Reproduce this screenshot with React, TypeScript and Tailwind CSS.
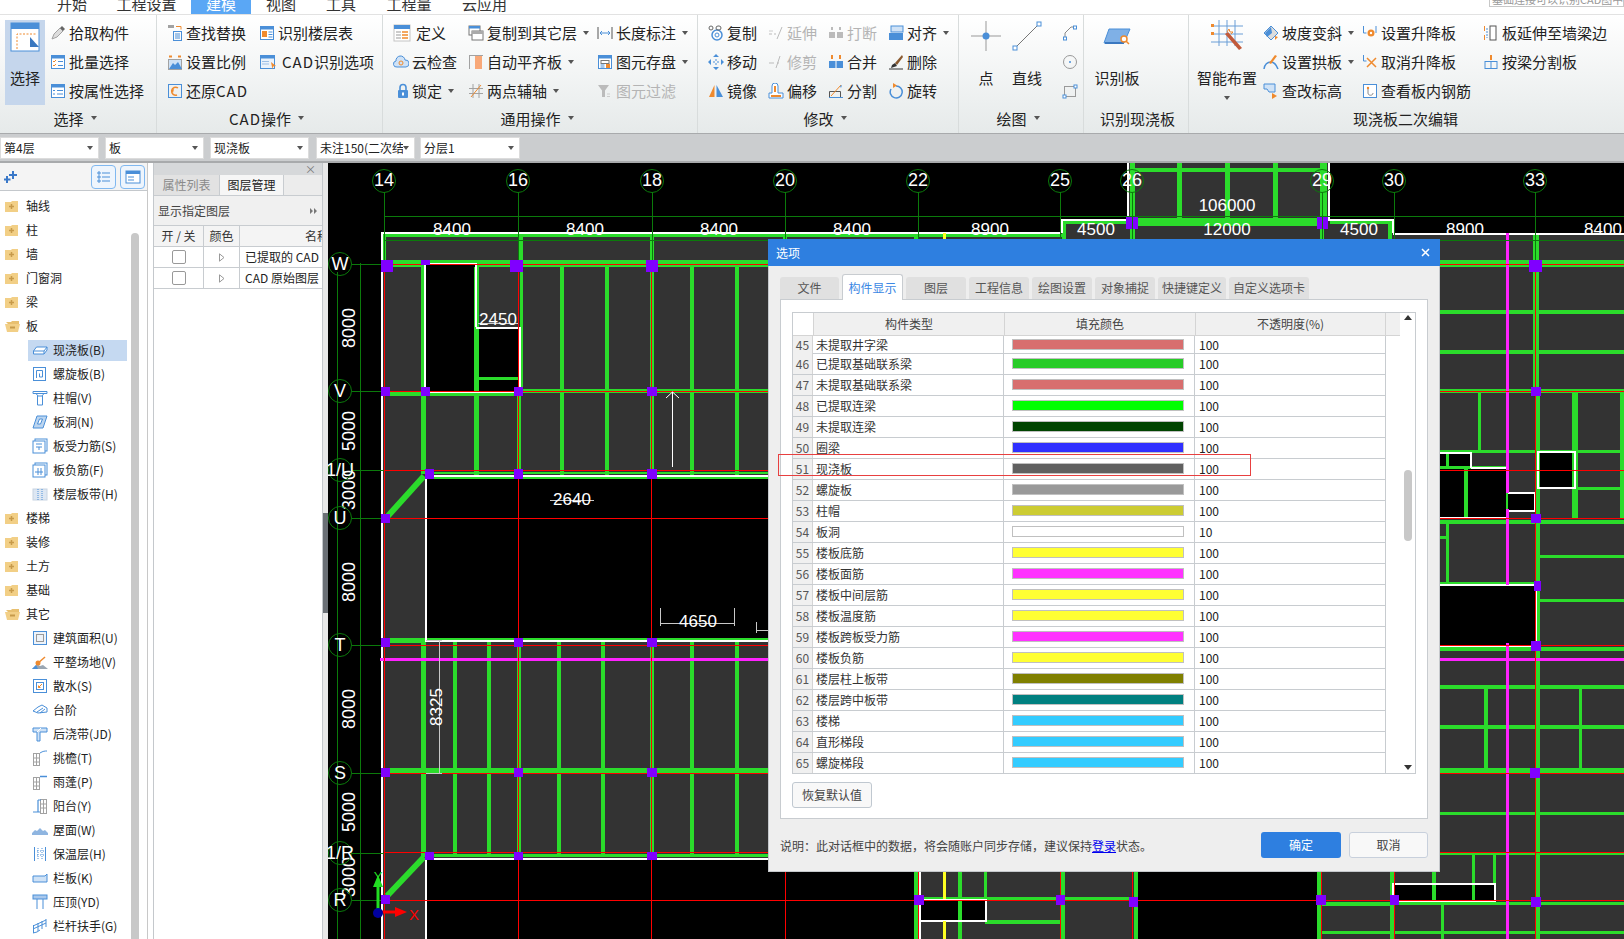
import React from 'react';

const B = '#4a8fd8';
const O = '#ef8a2e';
const G = '#a2a2a2';
const D = '#555555';

const Svg = ({ children, w = 16, h = 16 }: { children: React.ReactNode; w?: number; h?: number }) => (
  <svg width={w} height={h} viewBox={`0 0 ${w} ${h}`} fill="none" className="shrink-0">
    {children}
  </svg>
);

const Win = ({ fill = '#fff' }: { fill?: string }) => (
  <>
    <rect x="1.5" y="1.5" width="13" height="13" fill={fill} stroke={B} />
    <rect x="1" y="1" width="14" height="3.5" fill={B} />
  </>
);

/* ribbon icons */
const ri: Record<string, React.ReactNode> = {
  pick: <Svg><path d="M2 14l2-5 6-6 3 3-6 6z" fill="#ddd" stroke={G} /><path d="M10 3l2-2 3 3-2 2z" fill="#666" /></Svg>,
  batch: <Svg><Win /><path d="M3 7l1 1 2-2M3 11l1 1 2-2" stroke={O} /><path d="M8 7.5h5M8 11.5h5" stroke={B} /></Svg>,
  attr: <Svg><Win /><path d="M3 7.5h2M3 11h2M7 7.5h6M7 11h6" stroke={B} /></Svg>,
  find: <Svg><path d="M1 1.5h6" stroke={G} strokeWidth="3" /><path d="M9 1.5h5v3" stroke={O} /><rect x="6.5" y="6.5" width="8" height="9" stroke={B} /><path d="M8 9h5M8 11h5M8 13h5" stroke={B} /></Svg>,
  scale: <Svg><path d="M2 2.5h3M11 2.5h3" stroke={O} strokeWidth="2" /><rect x="1.5" y="5.5" width="13" height="10" fill="#cfe2f6" stroke={G} /><path d="M2 15l4-6 2 2 3-3 4 7z" fill={B} /></Svg>,
  restore: <Svg><rect x="1.5" y="1.5" width="13" height="13" stroke={B} /><path d="M11 5a4 4 0 1 0-1 7" stroke={O} strokeWidth="1.5" /><path d="M4 7l2 3 1-4z" fill={O} /></Svg>,
  floor: <Svg><Win /><rect x="3" y="6" width="5" height="6" fill={O} /><path d="M9.5 7h4M9.5 9.5h4M9.5 12h4" stroke={B} /></Svg>,
  cadopt: <Svg w={18}><rect x="1.5" y="1.5" width="14" height="13" fill="#eaf2fb" stroke={B} /><rect x="1" y="1" width="15" height="3.5" fill={B} /><path d="M3 7.500h7M3 10h7" stroke="#9dbfe6" /><path d="M12 8l5 4-3 .5-.5 3z" fill={O} /></Svg>,
  define: <Svg w={18} h={18}><rect x="1" y="1" width="16" height="16" fill="#fff" stroke="#c4c4c4" /><rect x="1" y="1" width="16" height="4" fill={B} /><path d="M3 8h5M3 11h5M3 14h5" stroke="#999" /><path d="M9 8h6M9 11h6M9 14h6" stroke={O} strokeWidth="1.4" /></Svg>,
  cloud: <Svg><path d="M4 13a3 3 0 0 1-1-6 4.5 4.5 0 0 1 9-1 3.5 3.5 0 0 1 1 7z" fill="#cfe2f6" stroke={B} /><circle cx="8" cy="9" r="2" stroke={O} /></Svg>,
  lock: <Svg w={12} h={16}><path d="M3 7V4.500a3 3 0 0 1 6 0V7" stroke={B} strokeWidth="1.6" /><rect x="1" y="7" width="10" height="8" rx="1" fill={B} /><rect x="5" y="9.500" width="2" height="3" fill="#fff" /></Svg>,
  copy: <Svg><rect x="1" y="1" width="11" height="9" fill="#fff" stroke="#777" /><rect x="1" y="1" width="11" height="2.500" fill={B} /><rect x="4" y="6" width="11" height="9" fill="#fff" stroke="#777" /><rect x="4" y="6" width="11" height="3" fill="#aaa" /></Svg>,
  flush: <Svg><path d="M1.500 1v14" stroke={G} /><path d="M1 1.500h14" stroke={G} /><rect x="7" y="2" width="7" height="13" fill="#f8a878" /></Svg>,
  axis: <Svg><path d="M5 1v14M11 1v14M1 5.500h14M1 10.500h14" stroke={G} /><path d="M3 14L13 2" stroke={O} /></Svg>,
  dim: <Svg><path d="M1 2v12M15 2v12" stroke={D} /><path d="M3 8h10M3 8l2-2M3 8l2 2M13 8l-2-2M13 8l-2 2" stroke={B} /></Svg>,
  save: <Svg><Win /><rect x="4" y="6.500" width="8" height="3" stroke="#777" /><rect x="9" y="10" width="4" height="4" fill={O} /><path d="M3.500 11h4M3.500 13h4" stroke={B} /></Svg>,
  filter: <Svg><path d="M1 2h11L8 7.500V14H5V7.500z" fill="#bbb" /><path d="M10 11h3M10 13.500h3" stroke="#ccc" /></Svg>,
  dup: <Svg><circle cx="9" cy="10" r="5" stroke={B} strokeWidth="1.500" /><circle cx="9" cy="10" r="2" stroke={B} /><rect x="1" y="1" width="4" height="4" rx="2" stroke="#666" /><rect x="8" y="1" width="5" height="4" rx="2" stroke="#666" /></Svg>,
  extend: <Svg><path d="M1 9h3M6 9h2" stroke="#bbb" /><path d="M9 14l5-12" stroke="#bbb" /><path d="M1 6h4" stroke="#ccc" /></Svg>,
  breakI: <Svg><rect x="1" y="7" width="6" height="6" fill="#bbb" /><rect x="9" y="7" width="6" height="6" fill="#bbb" /><path d="M4 2v3M12 2v3" stroke="#bbb" strokeWidth="2" /></Svg>,
  align: <Svg><rect x="3" y="1" width="12" height="6" fill="#cfe2f6" stroke={B} /><rect x="1" y="8" width="14" height="7" fill={B} /></Svg>,
  move: <Svg><path d="M8 1v14M1 8h14" stroke={B} strokeWidth="1" strokeDasharray="2 2" /><path d="M8 0l3 3H5zM8 16l-3-3h6zM0 8l3-3v6zM16 8l-3 3V5z" fill={B} /></Svg>,
  trim: <Svg><path d="M1 9h5M9 9h2" stroke="#bbb" /><path d="M8 14l4-12" stroke="#bbb" /></Svg>,
  merge: <Svg><path d="M4 1v4M12 1v4" stroke={O} strokeWidth="2" /><rect x="1" y="7" width="14" height="7" fill={B} /><path d="M8 7v7" stroke="#fff" /></Svg>,
  del: <Svg><path d="M14 1L7 9l2 2 6-8z" fill="#8a5a30" /><path d="M7 9l-3 2-1 3 6-2z" fill="#333" /><path d="M1 15h14" stroke="#333" /></Svg>,
  mirror: <Svg><path d="M6.500 2v12H1z" fill={O} /><path d="M8.500 2v12H15z" fill={B} /></Svg>,
  offset: <Svg><path d="M1 15v-5h3V3a3 3 0 0 1 6 0v7h5v5z" fill="#fff" stroke={B} /><path d="M3 13h10" stroke={O} strokeWidth="2" /><path d="M6 9V3h2v6z" fill={O} /></Svg>,
  split: <Svg><path d="M1.500 8.500h11v6h-11z" stroke="#555" /><path d="M3 13L13 2" stroke={O} /><path d="M12 3l2-1-1 3z" fill={B} /><path d="M1 14.500h14" stroke={B} /></Svg>,
  rotate: <Svg><path d="M8 3a6 6 0 1 1-5 3" stroke={B} strokeWidth="1.500" /><path d="M5 0l4 2.500L5 5z" fill={O} /></Svg>,
  slope: <Svg><path d="M1 8l7-7 7 7-7 7z" fill="#ddd" stroke={B} /><path d="M2 8l6-6 1 6-5 4z" fill={B} /><path d="M12 15l3-3-3-1z" fill={O} /></Svg>,
  arch: <Svg><path d="M1 15c1-6 4-7 7-7s5 2 7 7" stroke={B} strokeWidth="1.500" /><path d="M6 9l6-8 2 1-6 8z" fill={O} /></Svg>,
  height: <Svg><path d="M1 1h11v8H6L4 6H1z" fill="#cfe2f6" stroke={B} /><path d="M9 10l5 3-5 3z" fill={O} /></Svg>,
  up: <Svg><path d="M1.500 1v7h3M14 1v7" stroke={B} /><circle cx="9" cy="8" r="3.500" fill={O} /><circle cx="9" cy="8" r="1.200" fill="#fff" /></Svg>,
  cancel: <Svg><path d="M1.500 1v6h3" stroke={B} /><path d="M5 4l9 9M14 4l-9 9" stroke={O} strokeWidth="1.500" /></Svg>,
  rebar: <Svg><rect x="1.500" y="1.500" width="13" height="13" fill="#fff" stroke={B} /><path d="M6 4v6c0 3 5 3 5 0" stroke="#888" /><circle cx="6" cy="5" r="1.200" fill={O} /></Svg>,
  extendWall: <Svg><path d="M1.500 1v5M1.500 10v5" stroke={O} /><rect x="7" y="1" width="6" height="14" fill="#fff" stroke={D} /><path d="M4 3v10" stroke={B} strokeDasharray="2 1" /></Svg>,
  byBeam: <Svg><path d="M8 1v5" stroke={O} strokeWidth="2" /><rect x="2" y="7.500" width="12" height="7" stroke={B} /><path d="M8 7v8" stroke={B} /></Svg>,
  arc: <Svg><path d="M3 15V8l6-6h3" stroke="#888" /><rect x="11.500" y="1" width="3" height="3" fill="#fff" stroke={B} /><rect x="1.500" y="12" width="3" height="3" fill="#fff" stroke={B} /></Svg>,
  circle: <Svg><circle cx="8" cy="8" r="6.500" stroke="#999" /><circle cx="8" cy="8" r="1" fill={B} /></Svg>,
  rect: <Svg><rect x="2.500" y="3.500" width="11" height="10" stroke="#999" /><rect x="1" y="12" width="3" height="3" fill="#fff" stroke={B} /><rect x="12" y="2" width="3" height="3" fill="#fff" stroke={B} /></Svg>,
};

/* tree icons */
const ti: Record<string, React.ReactNode> = {
  slab: <Svg><path d="M1.500 9l3-4H15v3l-3 4H1.500z" fill="#fff" stroke={B} /><path d="M1.500 9H12l3-4M12 9v3" stroke={B} /></Svg>,
  spiral: <Svg><rect x="1.500" y="1.500" width="12" height="13" stroke={B} /><path d="M4.500 12V4.500h6V11H7.500V7.500" stroke={B} /></Svg>,
  cap: <Svg><path d="M1 1.500h14M1 1.500v2h14v-2M4 3.500L6 6h4l2-2.500M5.500 6v9h5V6" stroke={B} /></Svg>,
  hole: <Svg><path d="M1 14L5 2h10l-4 12z" fill="#bcd5ef" stroke={B} /><path d="M5.500 10l2-5h3l-2 5z" fill="#fff" stroke={B} /></Svg>,
  force: <Svg><rect x="3" y="1" width="12" height="12" fill="#fff" stroke={B} /><rect x="1" y="3" width="12" height="12" fill="#fff" stroke={B} /><path d="M4 9h6M4 6h6M7 9v3" stroke={B} /></Svg>,
  neg: <Svg><rect x="3" y="1" width="12" height="12" fill="#fff" stroke={B} /><rect x="1" y="3" width="12" height="12" fill="#fff" stroke={B} /><path d="M3 10h8M6 6v7M9 6v7" stroke={B} /></Svg>,
  strip: <Svg><rect x="1" y="3" width="14" height="11" fill="#dde7f3" stroke="#c8d4e2" /><path d="M6 3v11M10 3v11" stroke={B} strokeDasharray="1 1" /></Svg>,
  area: <Svg><rect x="1.500" y="1.500" width="13" height="13" fill="#eef3f9" stroke={B} /><rect x="4.500" y="4.500" width="7" height="7" stroke="#999" /></Svg>,
  site: <Svg><path d="M0 15l5-5 3 2 3-1 5 4z" fill="#9aa6b2" /><path d="M0 15l4-4 2 4z" fill={B} /><path d="M5 10l8-7" stroke={O} strokeWidth="1.500" /><circle cx="6" cy="9" r="2.500" fill={O} /></Svg>,
  apron: <Svg><rect x="1.500" y="1.500" width="13" height="13" stroke={B} /><rect x="4.500" y="4.500" width="7" height="7" stroke={B} /><path d="M10 6L6.500 9.500M6.500 7.500v2h2" stroke={O} /></Svg>,
  step: <Svg><path d="M1 9l5-4 4-2 5 3v4l-9 1-5-2z" fill="#fff" stroke={B} /><path d="M5 10l6-4M8 11l5-4" stroke={B} /></Svg>,
  pour: <Svg><path d="M1 2h14v4H8v9H5V6H1z" fill="#cfe2f6" stroke={B} /><path d="M9 2L5 6" stroke="#fff" /></Svg>,
  eave: <Svg><rect x="1.500" y="3.500" width="6" height="12" stroke={G} /><path d="M1.500 8h6M1.500 12h6M4.500 3.500v12" stroke={G} /><path d="M8 3c3-2 5-2 7-2" stroke={B} /></Svg>,
  canopy: <Svg><rect x="1.500" y="3.500" width="6" height="12" stroke={G} /><path d="M1.500 8h6M1.500 12h6M4.500 3.500v12" stroke={G} /><path d="M8 2.500h7" stroke={B} strokeWidth="1.500" /></Svg>,
  balcony: <Svg><rect x="8.500" y="1.500" width="6" height="14" stroke={G} /><path d="M8.500 6h6M8.500 10h6M11.500 1.500v14" stroke={G} /><path d="M1 14h7M6 2h3M6 2v12" stroke={B} strokeWidth="1.200" /></Svg>,
  roof: <Svg><path d="M0 11l3-3 2 1 3-3 3 3 2-1 3 3v2H0z" fill="#8fb5e0" /></Svg>,
  insul: <Svg><path d="M2.500 1v14M13.500 1v14" stroke={B} /><path d="M6 2v12M10 2v12" stroke={B} strokeDasharray="1 1" /><path d="M2 5h12M2 9h12" stroke={B} strokeDasharray="1 2" /></Svg>,
  board: <Svg><path d="M1 6h12l2-2v8H1z" fill="#cfe2f6" stroke={B} /></Svg>,
  top: <Svg><rect x="1" y="1" width="14" height="4" fill="#a9c8ec" stroke={B} /><path d="M5 5v10M11 5v10" stroke={B} /></Svg>,
  rail: <Svg><path d="M1 8l13-6" stroke={B} /><path d="M1.500 7v8M6 5v8M10 3v8M14 1v8M1 15l4-1 3-2" stroke={B} /><path d="M1 11l13-6" stroke={B} /></Svg>,
};

const Arrow = () => <svg width="6" height="4" viewBox="0 0 6 4" className="shrink-0"><path d="M0 0h6L3 4z" fill="#555" /></svg>;

interface ItemProps {
  icon: React.ReactNode;
  label: React.ReactNode;
  arrow?: boolean;
  off?: boolean;
  box?: string;
}

const Item = ({ icon, label, arrow, off, box = 'w-[19px]' }: ItemProps) => (
  <div className={`flex items-center h-[29px] whitespace-nowrap ${off ? 'text-[#b4b4b4]' : 'text-[#222]'}`}>
    <span className={`${box} flex items-center shrink-0`}>{icon}</span>
    <span>{label}</span>
    {arrow && <span className="ml-[6px]"><Arrow /></span>}
  </div>
);

const Group = ({ w, label, arrow, children, last }: { w: string; label: React.ReactNode; arrow?: boolean; children: React.ReactNode; last?: boolean }) => (
  <div className={`${w} shrink-0 flex flex-col ${last ? '' : 'border-r border-[#d8dcdc]'}`}>
    <div className="h-[90px] flex pt-[3px]">{children}</div>
    <div className={`h-[26px] flex items-center justify-center gap-[7px] text-[#222] ${arrow ? 'pr-[6px]' : 'pl-[3px]'}`}>
      <span>{label}</span>
      {arrow && <Arrow />}
    </div>
  </div>
);

const Big = ({ icon, label, w }: { icon: React.ReactNode; label: string; w: string }) => (
  <div className={`${w} h-[87px] flex flex-col items-center pt-[3px] shrink-0`}>
    <div className="h-[30px] flex items-center">{icon}</div>
    <span className="mt-[16px] leading-[22px] whitespace-nowrap text-[#222]">{label}</span>
  </div>
);

const Cad = () => <span className="tracking-[1px]">CAD</span>;

function Ribbon() {
  return (
    <div className="h-[118px] flex bg-gradient-to-b from-white to-[#e6eaea] text-[15px] leading-none">
      <Group w="w-[157px]" label="选择" arrow>
        <div className="ml-[5px] mt-[2px] w-[40px] h-[85px] bg-[#c5d6ec] flex flex-col items-center pt-[2px] shrink-0">
          <svg width="30" height="30" viewBox="0 0 30 30" fill="none">
            <rect x="1" y="1" width="28" height="28" fill="#fff" stroke={B} />
            <rect x="1" y="1" width="28" height="6" fill={B} />
            <path d="M7 27V12h19" stroke={O} strokeDasharray="2 1.500" />
            <path d="M20 15l9 10h-9z" fill="#3a78c0" />
          </svg>
          <span className="mt-[15px] leading-[22px] text-[#222]">选择</span>
        </div>
        <div className="ml-[5px]">
          <Item icon={ri.pick} label="拾取构件" />
          <Item icon={ri.batch} label="批量选择" />
          <Item icon={ri.attr} label="按属性选择" />
        </div>
      </Group>
      <Group w="w-[226px]" label={<><Cad />操作</>} arrow>
        <div className="ml-[10px] w-[92px]">
          <Item icon={ri.find} label="查找替换" />
          <Item icon={ri.scale} label="设置比例" />
          <Item icon={ri.restore} label={<>还原<Cad /></>} />
        </div>
        <div>
          <Item icon={ri.floor} label="识别楼层表" />
          <Item icon={ri.cadopt} box="w-[23px]" label={<><Cad />识别选项</>} />
        </div>
      </Group>
      <Group w="w-[315px]" label="通用操作" arrow>
        <div className="ml-[10px] w-[75px]">
          <Item icon={ri.define} label="定义" box="w-[23px]" />
          <Item icon={ri.cloud} label="云检查" />
          <Item icon={<span className="ml-[4px] flex">{ri.lock}</span>} label="锁定" arrow />
        </div>
        <div className="w-[129px]">
          <Item icon={ri.copy} label="复制到其它层" arrow />
          <Item icon={ri.flush} label="自动平齐板" arrow />
          <Item icon={ri.axis} label="两点辅轴" arrow />
        </div>
        <div>
          <Item icon={ri.dim} label="长度标注" arrow />
          <Item icon={ri.save} label="图元存盘" arrow />
          <Item icon={ri.filter} label="图元过滤" off />
        </div>
      </Group>
      <Group w="w-[261px]" label="修改" arrow>
        <div className="ml-[10px] w-[60px]">
          <Item icon={ri.dup} label="复制" />
          <Item icon={ri.move} label="移动" />
          <Item icon={ri.mirror} label="镜像" />
        </div>
        <div className="w-[60px]">
          <Item icon={ri.extend} label="延伸" off />
          <Item icon={ri.trim} label="修剪" off />
          <Item icon={ri.offset} label="偏移" />
        </div>
        <div className="w-[60px]">
          <Item icon={ri.breakI} label="打断" off />
          <Item icon={ri.merge} label="合并" />
          <Item icon={ri.split} label="分割" />
        </div>
        <div>
          <Item icon={ri.align} label="对齐" arrow />
          <Item icon={ri.del} label="删除" />
          <Item icon={ri.rotate} label="旋转" />
        </div>
      </Group>
      <Group w="w-[125px]" label="绘图" arrow>
        <div className="ml-[12px] mr-[11px]">
          <Big w="w-[30px]" label="点" icon={
            <svg width="30" height="30" viewBox="0 0 30 30" fill="none">
              <path d="M15 0v30M0 15h30" stroke="#999" />
              <circle cx="15" cy="15" r="3.500" fill={B} />
            </svg>
          } />
        </div>
        <div className="mr-[20px]">
          <Big w="w-[30px]" label="直线" icon={
            <svg width="30" height="30" viewBox="0 0 30 30" fill="none">
              <path d="M3 27L27 3" stroke="#777" />
              <rect x="1" y="25" width="4" height="4" fill="#fff" stroke={B} />
              <rect x="25" y="1" width="4" height="4" fill="#fff" stroke={B} />
            </svg>
          } />
        </div>
        <div className="flex flex-col">
          <div className="h-[29px] flex items-center">{ri.arc}</div>
          <div className="h-[29px] flex items-center">{ri.circle}</div>
          <div className="h-[29px] flex items-center">{ri.rect}</div>
        </div>
      </Group>
      <Group w="w-[105px]" label="识别现浇板">
        <div className="ml-[19px]">
          <Big w="w-[28px]" label="识别板" icon={
            <svg width="28" height="18" viewBox="0 0 28 18" fill="none">
              <path d="M1 16L6 2h21l-6 14z" fill="#7fb0e6" stroke={B} />
              <path d="M2 16h19" stroke="#3a78c0" strokeWidth="2" />
              <circle cx="21" cy="12" r="3" fill="#fff" stroke={O} strokeWidth="1.500" />
              <path d="M23 14l3 3" stroke={O} strokeWidth="1.500" />
            </svg>
          } />
        </div>
      </Group>
      <Group w="w-[430px]" label="现浇板二次编辑" last>
        <div className="ml-[22px] mr-[20px] relative">
          <Big w="w-[32px]" label="智能布置" icon={
            <svg width="32" height="32" viewBox="0 0 32 32" fill="none">
              <path d="M8 0v26M16 0v26M24 0v26M0 6h32M0 14h32M0 22h32" stroke="#6a9ed6" />
              <path d="M14 14l14 16 3-2-14-16z" fill="#c25a3a" />
              <path d="M16 12l2-3 1 3 3 0-2 2" stroke={O} />
              <rect x="0" y="4" width="3" height="3" fill={O} />
              <rect x="0" y="12" width="3" height="3" fill={O} />
            </svg>
          } />
          <div className="absolute left-[13px] top-[78px]"><Arrow /></div>
        </div>
        <div className="w-[99px]">
          <Item icon={ri.slope} label="坡度变斜" arrow />
          <Item icon={ri.arch} label="设置拱板" arrow />
          <Item icon={ri.height} label="查改标高" />
        </div>
        <div className="w-[121px]">
          <Item icon={ri.up} label="设置升降板" />
          <Item icon={ri.cancel} label="取消升降板" />
          <Item icon={ri.rebar} label="查看板内钢筋" />
        </div>
        <div>
          <Item icon={ri.extendWall} label="板延伸至墙梁边" />
          <Item icon={ri.byBeam} label="按梁分割板" />
        </div>
      </Group>
    </div>
  );
}

function TabBar() {
  const tabs: [string, string, boolean?][] = [
    ['开始', 'w-[60px]'],
    ['工程设置', 'w-[89px]'],
    ['建模', 'w-[60px]', true],
    ['视图', 'w-[60px]'],
    ['工具', 'w-[60px]'],
    ['工程量', 'w-[76px]'],
    ['云应用', 'w-[75px]'],
  ];
  return (
    <div className="h-[15px] flex bg-white border-b border-[#e2e2e2] overflow-hidden relative">
      <div className="w-[42px] shrink-0" />
      {tabs.map(([t, w, active]) => (
        <div key={t} className={`${w} shrink-0 flex items-end justify-center pb-[3px] text-[15px] leading-[15px] ${active ? 'bg-[#5aa7f5] text-white' : 'text-[#333]'}`}>
          {t}
        </div>
      ))}
      <div className="flex-1" />
      <div className="w-[135px] -mt-[9px] h-[16px] border border-[#c8c8c8] text-[11px] leading-[15px] text-[#999] pl-[2px] whitespace-nowrap overflow-hidden">
        基础连接可以识别CAD图中
      </div>
    </div>
  );
}

const Sel = ({ text, w }: { text: string; w: string }) => (
  <div className={`${w} shrink-0 h-[22px] bg-white border border-[#dcdcdc] flex items-center pl-[3px] pr-[5px] text-[12px] text-[#222] overflow-hidden`}>
    <span className="flex-1 whitespace-nowrap overflow-hidden">{text}</span>
    <Arrow />
  </div>
);

function ToolRow() {
  return (
    <div className="h-[30px] bg-[#cbcdcf] border-t border-[#a8aaac] border-b-2 border-b-[#a8aaac] flex items-center">
      <Sel text="第4层" w="w-[99px]" />
      <div className="ml-[6px]"><Sel text="板" w="w-[99px]" /></div>
      <div className="ml-[6px]"><Sel text="现浇板" w="w-[99px]" /></div>
      <div className="ml-[7px]"><Sel text="未注150(二次结" w="w-[99px]" /></div>
      <div className="ml-[5px]"><Sel text="分层1" w="w-[100px]" /></div>
    </div>
  );
}

const Folder = ({ open }: { open?: boolean }) =>
  open ? (
    <Svg w={16} h={14}>
      <path d="M1 3h5l1-1h7v3H3z" fill="#e8c070" />
      <path d="M0 5h15l-2 8H2z" fill="#f2cf86" />
      <path d="M5 8.500h5" stroke="#c79a4a" strokeWidth="2" />
    </Svg>
  ) : (
    <Svg w={14} h={14}>
      <path d="M0 3h6l1-1h6v11H0z" fill="#f2cf86" />
      <path d="M4 7.500h5M6.500 5v5" stroke="#c79a4a" strokeWidth="1.500" />
    </Svg>
  );

type TreeNode = { t: string; icon?: string; open?: boolean; sel?: boolean };

const tree: TreeNode[] = [
  { t: '轴线' }, { t: '柱' }, { t: '墙' }, { t: '门窗洞' }, { t: '梁' }, { t: '板', open: true },
  { t: '现浇板(B)', icon: 'slab', sel: true }, { t: '螺旋板(B)', icon: 'spiral' }, { t: '柱帽(V)', icon: 'cap' },
  { t: '板洞(N)', icon: 'hole' }, { t: '板受力筋(S)', icon: 'force' }, { t: '板负筋(F)', icon: 'neg' },
  { t: '楼层板带(H)', icon: 'strip' },
  { t: '楼梯' }, { t: '装修' }, { t: '土方' }, { t: '基础' }, { t: '其它', open: true },
  { t: '建筑面积(U)', icon: 'area' }, { t: '平整场地(V)', icon: 'site' }, { t: '散水(S)', icon: 'apron' },
  { t: '台阶', icon: 'step' }, { t: '后浇带(JD)', icon: 'pour' }, { t: '挑檐(T)', icon: 'eave' },
  { t: '雨蓬(P)', icon: 'canopy' }, { t: '阳台(Y)', icon: 'balcony' }, { t: '屋面(W)', icon: 'roof' },
  { t: '保温层(H)', icon: 'insul' }, { t: '栏板(K)', icon: 'board' }, { t: '压顶(YD)', icon: 'top' },
  { t: '栏杆扶手(G)', icon: 'rail' },
];

function Tree() {
  return (
    <div className="w-[148px] shrink-0 flex flex-col bg-white border-r border-[#c8c8c8] overflow-hidden">
      <div className="h-[28px] shrink-0 bg-[#f4f4f4] border-b border-[#c4c8cc] flex items-center pl-[4px]">
        <svg width="13" height="12" viewBox="0 0 13 12">
          <path d="M8 0h2v3h3v2h-3v3H8V5H5V3h3zM2 5h2v2.500h2.500v2H4V12H2V9.500H0v-2h2z" fill="#3a78c8" />
        </svg>
        <div className="ml-[74px] w-[25px] h-[24px] rounded-[4px] border border-[#80b8f0] bg-[#eef5fd] flex items-center justify-center">
          <Svg w={14} h={14}><path d="M1 2h2v2H1zM1 6h2v2H1zM1 10h2v2H1zM5 3h8M5 7h8M5 11h8" stroke={B} /></Svg>
        </div>
        <div className="ml-[4px] w-[25px] h-[24px] rounded-[4px] border border-[#80b8f0] bg-[#eef5fd] flex items-center justify-center">
          <Svg w={16} h={14}><rect x="1" y="1" width="14" height="12" fill="#fff" stroke={B} /><rect x="1" y="1" width="14" height="3" fill={B} /><path d="M3 7h6M3 10h6" stroke={B} /></Svg>
        </div>
      </div>
      <div className="flex-1 flex min-h-0">
        <div className="w-[131px] shrink-0 pt-[3px] text-[12px] text-[#222] overflow-hidden">
          {tree.map((n) => (
            <div key={n.t} className="h-[24px] flex items-center">
              {n.icon ? (
                <div className={`ml-[28px] w-[99px] h-[21px] flex items-center pl-[4px] whitespace-nowrap ${n.sel ? 'bg-[#c5d9f1]' : ''}`}>
                  <span className="w-[21px] shrink-0 flex">{ti[n.icon]}</span>
                  {n.t}
                </div>
              ) : (
                <>
                  <span className="ml-[5px] w-[21px] shrink-0 flex"><Folder open={n.open} /></span>
                  {n.t}
                </>
              )}
            </div>
          ))}
        </div>
        <div className="w-[8px] mt-[42px] bg-[#c8c8c8] rounded-t-full" />
      </div>
    </div>
  );
}

function LayerPanel() {
  const cell = 'border-r border-b border-[#c8ccd0] flex items-center justify-center';
  return (
    <div className="w-[170px] shrink-0 ml-[5px] flex flex-col bg-white border-x border-[#c4c8cc] text-[12px] overflow-hidden">
      <div className="h-[12px] bg-[#d6d8da] flex items-center justify-end pr-[6px] text-[11px] leading-none text-[#777]">×</div>
      <div className="h-[21px] flex bg-[#ececec] border-b border-[#c8ccd0]">
        <div className="w-[65px] bg-[#e2e2e2] flex items-center justify-center text-[#8a8a8a]">属性列表</div>
        <div className="w-[65px] bg-[#f6f6f6] border-x border-[#c8ccd0] flex items-center justify-center text-[#222]">图层管理</div>
      </div>
      <div className="h-[30px] bg-[#f0f0f0] border-b border-[#c8ccd0] flex items-center justify-between pl-[4px] pr-[4px] text-[#444]">
        显示指定图层
        <svg width="8" height="6" viewBox="0 0 8 6"><path d="M0 0l3 3-3 3zM4 0l3 3-3 3z" fill="#777" /></svg>
      </div>
      <div className="grid grid-cols-[50px_36px_84px] h-[21px] bg-[#f4f4f4] text-[#333]">
        <div className={cell}>开 / 关</div>
        <div className={cell}>颜色</div>
        <div className="border-b border-[#c8ccd0] flex items-center justify-end whitespace-nowrap overflow-hidden"><span className="-mr-[5px]">名称</span></div>
      </div>
      {['已提取的 CAD', 'CAD 原始图层'].map((n) => (
        <div key={n} className="grid grid-cols-[50px_36px_84px] h-[21px] text-[#222]">
          <div className={cell}><div className="w-[14px] h-[14px] rounded-[2px] border border-[#999] bg-white" /></div>
          <div className={cell}><svg width="6" height="9" viewBox="0 0 6 9" fill="none"><path d="M.5.800l4.500 3.700-4.500 3.700z" stroke="#999" /></svg></div>
          <div className="border-b border-[#c8ccd0] flex items-center pl-[5px] whitespace-nowrap overflow-hidden">{n}</div>
        </div>
      ))}
    </div>
  );
}

/* ---- CAD drawing, in page coordinates ---- */
type R = [number, number, number, number];

const gray: R[] = [[382, 233, 1242, 706], [1128, 163, 200, 70], [1062, 219, 332, 14]];
const underGreen: R[] = [[382, 260, 1242, 7]];
const holes: R[] = [
  [425, 265, 51, 127], [476, 327, 44, 65], [425, 476, 1015, 164], [425, 858, 489, 81], [1138, 860, 179, 79], [920, 900, 65, 21],
  [1440, 453, 31, 14], [1440, 467, 67, 51], [1508, 493, 28, 18], [1537, 452, 38, 36], [1440, 585, 96, 60], [1392, 883, 103, 18],
];
const green: R[] = [
  [384, 234, 678, 3], [383, 233, 3, 27], [518, 235, 5, 30], [520, 267, 3, 125], [517, 393, 4, 82], [650, 235, 4, 240],
  [560, 267, 4, 208], [605, 267, 4, 208], [690, 267, 4, 208], [735, 267, 4, 208], [421, 267, 5, 207], [474, 267, 5, 208],
  [520, 389, 1104, 4], [382, 392, 138, 4], [479, 377, 40, 3], [426, 472, 1014, 2], [426, 477, 1014, 2],
  [390, 638, 35, 5], [426, 638, 1014, 2], [390, 768, 1234, 5], [421, 640, 5, 217], [453, 642, 4, 212], [487, 642, 4, 212],
  [517, 642, 4, 212], [557, 642, 4, 212], [601, 642, 4, 212], [650, 642, 4, 212], [690, 642, 4, 212], [735, 642, 4, 212],
  [426, 854, 489, 3],
  // notch over the top
  [1130, 163, 5, 76], [1135, 168, 185, 4], [1135, 218, 185, 8], [1177, 163, 5, 55], [1225, 163, 5, 55], [1273, 163, 5, 55],
  [1320, 163, 7, 56], [1320, 219, 4, 20], [1063, 221, 65, 3], [1062, 221, 4, 18], [1330, 221, 60, 3], [1388, 221, 4, 18],
  [914, 235, 4, 6], [783, 235, 4, 6],
  // right of the dialog
  [1533, 235, 6, 155], [1536, 391, 4, 548], [1440, 310, 184, 4], [1440, 350, 184, 4], [1478, 393, 3, 58], [1572, 393, 6, 125],
  [1620, 393, 4, 125], [1440, 450, 184, 3], [1446, 452, 3, 15], [1440, 466, 67, 3], [1464, 468, 4, 50], [1506, 492, 2, 18],
  [1575, 487, 49, 3], [1440, 520, 184, 4], [1539, 555, 85, 3], [1446, 522, 3, 62], [1440, 536, 8, 3], [1440, 582, 96, 2],
  [1440, 647, 184, 4], [1540, 599, 84, 3], [1440, 685, 184, 4], [1440, 725, 184, 4], [1440, 770, 184, 4], [1484, 687, 4, 84],
  [1579, 687, 3, 84], [1440, 812, 184, 3], [1440, 852, 184, 3], [1472, 854, 3, 48], [1493, 854, 3, 30], [1432, 872, 4, 30],
  [1380, 902, 244, 3], [1380, 931, 244, 3], [1441, 904, 3, 35], [1390, 872, 4, 67],
  // along the bottom
  [914, 860, 4, 79], [958, 872, 4, 67], [984, 872, 3, 28], [920, 897, 140, 3], [985, 920, 75, 4], [1061, 860, 4, 79],
  [1065, 897, 65, 3], [1134, 860, 4, 79], [1317, 860, 4, 79], [1322, 902, 68, 4], [1322, 931, 68, 3],
];
const white: R[] = [
  [381, 232, 680, 2], [381, 232, 2, 707], [1061, 219, 2, 14], [1061, 219, 67, 2], [1127, 163, 2, 58], [1328, 163, 2, 58],
  [1328, 219, 66, 2], [1392, 219, 2, 14], [1393, 233, 231, 2],
  [424, 263, 2, 129], [424, 263, 52, 2], [475, 263, 2, 64], [476, 327, 44, 2], [519, 327, 2, 65], [424, 391, 96, 2],
  [425, 475, 1015, 2], [425, 476, 2, 164], [425, 640, 1015, 2], [425, 858, 489, 2], [425, 858, 2, 81],
  [919, 872, 2, 67], [920, 899, 66, 2], [985, 899, 2, 23], [920, 920, 67, 2],
  [1440, 452, 32, 2], [1470, 452, 2, 16], [1471, 467, 36, 2], [1440, 517, 67, 2],
  [1537, 451, 38, 2], [1537, 451, 2, 38], [1574, 451, 2, 38], [1537, 487, 39, 2],
  [1508, 492, 28, 2], [1534, 492, 2, 19], [1508, 510, 28, 2],
  [1440, 584, 96, 2], [1535, 584, 2, 62], [1440, 645, 96, 2],
  [1392, 883, 103, 2], [1392, 883, 2, 19], [1494, 883, 2, 19], [1392, 900, 103, 2],
];
const magenta: R[] = [[1506, 233, 3, 260], [1506, 509, 3, 76], [1506, 643, 3, 296], [380, 658, 1244, 3]];
const yellow: R[] = [[943, 233, 3, 6], [943, 872, 3, 27], [943, 921, 3, 18]];
const purple: R[] = [
  [381, 260, 12, 12], [510, 260, 13, 12], [646, 260, 12, 12], [421, 260, 9, 5], [381, 387, 9, 9], [421, 387, 9, 9], [514, 387, 9, 9],
  [647, 387, 10, 9], [425, 469, 9, 10], [514, 469, 9, 10], [647, 469, 10, 10], [381, 514, 9, 9], [381, 638, 9, 9], [514, 638, 9, 9],
  [647, 638, 10, 9], [381, 768, 9, 9], [514, 768, 9, 9], [647, 768, 10, 9], [425, 852, 9, 8], [514, 852, 9, 8], [647, 852, 10, 8],
  [381, 895, 9, 9],
  [1126, 217, 6, 12], [1133, 217, 5, 12], [1317, 217, 5, 12], [1323, 217, 5, 12],
  [1529, 260, 13, 12], [1531, 387, 10, 9], [1531, 514, 10, 9], [1534, 581, 7, 10], [1531, 641, 10, 10], [1530, 768, 10, 10],
  [1531, 897, 10, 10], [914, 895, 10, 10], [1056, 895, 9, 10], [1129, 897, 9, 10], [1316, 895, 10, 10], [1390, 895, 9, 10],
];
const redH = [264, 391, 470, 518, 645, 773, 852, 900];
const redV = [384, 518, 651, 785, 918, 1060, 1132, 1321, 1394, 1535];
const axesX: [string, number][] = [['14', 384], ['16', 518], ['18', 652], ['20', 785], ['22', 918], ['25', 1060], ['26', 1132], ['29', 1322], ['30', 1394], ['33', 1535]];
const axesY: [string, number][] = [['W', 264], ['V', 391], ['1/U', 470], ['U', 518], ['T', 645], ['S', 773], ['1/R', 853], ['R', 900]];
const dimsTop: [string, number, number][] = [
  ['8400', 452, 229], ['8400', 585, 229], ['8400', 719, 229], ['8400', 852, 229], ['8900', 990, 229], ['4500', 1096, 229],
  ['12000', 1227, 229], ['106000', 1227, 205], ['4500', 1359, 229], ['8900', 1465, 229], ['8400', 1603, 229],
];
const dimsLeft: [string, number][] = [['8000', 328], ['5000', 431], ['3000', 490], ['8000', 582], ['8000', 709], ['5000', 812], ['3000', 877]];

const Rects = ({ list, fill }: { list: R[]; fill: string }) => (
  <>
    {list.map(([x, y, w, h], i) => (
      <rect key={i} x={x} y={y} width={w} height={h} fill={fill} />
    ))}
  </>
);

const DGREEN = '#0b7a0b';
const cadFont = { fontFamily: '"Liberation Sans", sans-serif' };

const CadText = ({ x, y, t, size = 17, rotate }: { x: number; y: number; t: string; size?: number; rotate?: boolean }) => (
  <text
    x={x}
    y={y}
    fill="#fff"
    fontSize={size}
    textAnchor="middle"
    dominantBaseline="central"
    style={cadFont}
    transform={rotate ? `rotate(-90 ${x} ${y})` : undefined}
  >
    {t}
  </text>
);

function CadDrawing() {
  return (
    <svg width="1296" height="776" viewBox="328 163 1296 776" className="block" shapeRendering="crispEdges">
      <rect x="328" y="163" width="1296" height="776" fill="#000" />
      <Rects list={gray} fill="#333333" />
      <Rects list={underGreen} fill="#2bdc2b" />
      <Rects list={holes} fill="#000" />
      <Rects list={green} fill="#2bdc2b" />
      <g shapeRendering="auto">
        <path d="M387 517L424 476" stroke="#2bdc2b" strokeWidth="6" />
        <path d="M387 896L424 857" stroke="#2bdc2b" strokeWidth="6" />
      </g>
      <Rects list={white} fill="#fff" />
      <Rects list={magenta} fill="#ff22ff" />
      <Rects list={yellow} fill="#ffff22" />
      {/* axis lines */}
      {axesX.map(([t, x]) => (
        <rect key={t} x={x} y={192} width={1} height={72} fill={DGREEN} />
      ))}
      <rect x="384" y="216" width="1240" height="1" fill={DGREEN} />
      <rect x="384" y="240" width="1240" height="1" fill={DGREEN} />
      <rect x="337" y="272" width="1" height="667" fill={DGREEN} />
      <rect x="360" y="263" width="1" height="676" fill={DGREEN} />
      {axesY.map(([t, y]) => (
        <rect key={t} x={352} y={y} width={32} height={1} fill={DGREEN} />
      ))}
      {redH.map((y) => (
        <rect key={y} x={384} y={y} width={1240} height={1} fill="#ff0000" />
      ))}
      {redV.map((x) => (
        <rect key={x} x={x} y={264} width={1} height={675} fill="#ff0000" />
      ))}
      <Rects list={purple} fill="#8000ff" />
      {/* dimensions */}
      <g fill="#c8c8c8">
        <rect x="439" y="640" width="1" height="134" />
        <rect x="426" y="640" width="16" height="1" />
        <rect x="426" y="773" width="16" height="1" />
        <rect x="660" y="623" width="75" height="1" />
        <rect x="660" y="608" width="1" height="18" />
        <rect x="734" y="608" width="1" height="18" />
        <rect x="756" y="630" width="12" height="1" />
        <rect x="756" y="622" width="1" height="11" />
        <rect x="478" y="323" width="40" height="1" />
        <rect x="550" y="500" width="44" height="1" />
      </g>
      <g shapeRendering="auto" stroke="#fff" fill="none">
        <path d="M672.500 467V392M666 398l6.500-6 6.500 6" />
      </g>
      <CadText x={498} y={319} t="2450" />
      <CadText x={572} y={499} t="2640" />
      <CadText x={698} y={621} t="4650" />
      <CadText x={436} y={707} t="8325" rotate />
      {dimsTop.map(([t, x, y], i) => (
        <CadText key={i} x={x} y={y} t={t} />
      ))}
      {dimsLeft.map(([t, y], i) => (
        <CadText key={i} x={349} y={y} t={t} rotate size={18} />
      ))}
      {/* axis bubbles */}
      <g shapeRendering="auto">
        {axesX.map(([t, x]) => (
          <g key={t}>
            <circle cx={x} cy={181} r={11.5} stroke={DGREEN} fill="none" />
            <CadText x={x} y={180} t={t} size={18} />
          </g>
        ))}
        {axesY.map(([t, y]) => (
          <g key={t}>
            <circle cx={340} cy={y} r={11.5} stroke={DGREEN} fill="none" />
            <CadText x={340} y={y} t={t} size={18} />
          </g>
        ))}
        {/* ucs */}
        <path d="M378 912V885" stroke="#22dd22" strokeWidth="3" />
        <path d="M378 875l-5 12h10z" fill="#22dd22" />
        <path d="M378 912h22" stroke="#ff0000" strokeWidth="3" />
        <path d="M407 912l-12-5v10z" fill="#ff0000" />
        <circle cx="378" cy="913" r="5" fill="#0000a0" />
        <text x="414" y="914" fill="#ff0000" fontSize="15" textAnchor="middle" dominantBaseline="central" style={cadFont}>X</text>
        <text x="378" y="876" fill="#22dd22" fontSize="13" textAnchor="middle" dominantBaseline="central" style={cadFont}>Y</text>
      </g>
    </svg>
  );
}

/* ---- options dialog ---- */
const optionTabs: [string, string, boolean?][] = [
  ['文件', 'w-[59px]'],
  ['构件显示', 'w-[61px]', true],
  ['图层', 'w-[60px]'],
  ['工程信息', 'w-[60px]'],
  ['绘图设置', 'w-[60px]'],
  ['对象捕捉', 'w-[60px]'],
  ['快捷键定义', 'w-[68px]'],
  ['自定义选项卡', 'w-[80px]'],
];

const rows: [number, string, string, number][] = [
  [45, '未提取井字梁', '#d86e6e', 100],
  [46, '已提取基础联系梁', '#28cc28', 100],
  [47, '未提取基础联系梁', '#d86e6e', 100],
  [48, '已提取连梁', '#00ff00', 100],
  [49, '未提取连梁', '#004400', 100],
  [50, '圈梁', '#3030ff', 100],
  [51, '现浇板', '#606060', 100],
  [52, '螺旋板', '#999999', 100],
  [53, '柱帽', '#cccc33', 100],
  [54, '板洞', '#ffffff', 10],
  [55, '楼板底筋', '#ffff33', 100],
  [56, '楼板面筋', '#ff33ff', 100],
  [57, '楼板中间层筋', '#ffff33', 100],
  [58, '楼板温度筋', '#ffff33', 100],
  [59, '楼板跨板受力筋', '#ff33ff', 100],
  [60, '楼板负筋', '#ffff33', 100],
  [61, '楼层柱上板带', '#808000', 100],
  [62, '楼层跨中板带', '#008080', 100],
  [63, '楼梯', '#33ccff', 100],
  [64, '直形梯段', '#33ccff', 100],
  [65, '螺旋梯段', '#33ccff', 100],
];

function OptionsDialog() {
  return (
    <div className="absolute left-[768px] top-[239px] w-[672px] h-[633px] flex flex-col text-[12px]">
      <div className="h-[27px] shrink-0 bg-[#2e7fe0] flex items-center justify-between pl-[8px] pr-[10px] text-white">
        <span>选项</span>
        <svg width="9" height="9" viewBox="0 0 9 9"><path d="M1 1l7 7M8 1L1 8" stroke="#fff" strokeWidth="1.500" /></svg>
      </div>
      <div className="flex-1 flex flex-col bg-[#eeeeee] border-x border-b border-[#c5c8cc] px-[11px]">
        <div className="h-[33px] shrink-0 flex items-end gap-[3px] relative z-10">
          {optionTabs.map(([t, w, active]) => (
            <div
              key={t}
              className={`${w} shrink-0 flex items-center justify-center whitespace-nowrap rounded-t-[3px] ${
                active
                  ? 'h-[26px] -mb-px bg-white border border-b-0 border-[#c8ccd0] text-[#3b88e4]'
                  : 'h-[22px] bg-[#e0e0e0] text-[#555]'
              }`}
            >
              {t}
            </div>
          ))}
        </div>
        <div className="h-[520px] shrink-0 bg-white border border-[#c8ccd0] pt-[12px] pl-[11px] pr-[10px]">
          <div className="relative w-[624px] h-[462px] border border-[#c8ccd0] overflow-hidden text-[#333]">
            <div className="w-[607px] h-[23px] flex bg-[#f0f0f0] border-b border-[#d4d4d4] text-[#444]">
              <div className="w-[20px] bg-white" />
              <div className="w-[191px] border-l border-[#d4d4d4] flex items-center justify-center">构件类型</div>
              <div className="w-[191px] border-l border-[#d4d4d4] flex items-center justify-center">填充颜色</div>
              <div className="w-[191px] border-x border-[#d4d4d4] flex items-center justify-center">不透明度(%)</div>
            </div>
            {rows.map(([no, name, color, op], i) => (
              <div
                key={no}
                className={`grid grid-cols-[20px_191px_191px_191px] w-[593px] border-b border-[#c8ccd0] ${i === 0 ? 'h-[18px]' : 'h-[21px]'}`}
              >
                <div className="bg-[#f0f0f0] border-r border-[#d4d4d4] flex items-center justify-center text-[#555]">{no}</div>
                <div className="border-r border-[#c8ccd0] flex items-center pl-[3px] whitespace-nowrap">{name}</div>
                <div className="border-r border-[#c8ccd0] flex items-center pl-[8px]">
                  <div className="w-[172px] h-[11px] mb-[2px] border border-[#c0c0c0]" style={{ backgroundColor: color }} />
                </div>
                <div className="border-r border-[#c8ccd0] flex items-center pl-[4px] text-[#222]">{op}</div>
              </div>
            ))}
            <svg width="8" height="5" viewBox="0 0 8 5" className="absolute right-[3px] top-[2px]"><path d="M4 0l4 5H0z" fill="#333" /></svg>
            <svg width="8" height="5" viewBox="0 0 8 5" className="absolute right-[3px] bottom-[3px]"><path d="M4 5l4-5H0z" fill="#333" /></svg>
            <div className="absolute right-[3px] top-[157px] w-[8px] h-[71px] rounded-full bg-[#c8c8c8]" />
          </div>
          <div className="mt-[8px] w-[80px] h-[26px] rounded-[3px] border border-[#c0c8d0] bg-[#f8f8f8] flex items-center justify-center text-[#444]">
            恢复默认值
          </div>
        </div>
        <div className="flex-1 flex items-center">
          <div className="flex-1 text-[#444] whitespace-nowrap pt-[2px]">
            说明：此对话框中的数据，将会随账户同步存储，建议保持<span className="text-[#0000ee] underline">登录</span>状态。
          </div>
          <div className="w-[80px] h-[26px] rounded-[3px] bg-[#2e7fe0] text-white flex items-center justify-center">确定</div>
          <div className="ml-[8px] w-[79px] h-[26px] rounded-[3px] border border-[#c8d0dc] bg-[#f8f8f8] text-[#444] flex items-center justify-center">取消</div>
        </div>
      </div>
      <div className="absolute left-[10px] top-[215px] w-[473px] h-[22px] border border-[#e84040] pointer-events-none" />
    </div>
  );
}

export default function App() {
  return (
    <div className="relative w-[1624px] h-[939px] overflow-hidden flex flex-col bg-white font-['Noto_Sans_CJK_SC','Noto_Sans',sans-serif]">
      <TabBar />
      <Ribbon />
      <ToolRow />
      <div className="flex-1 flex min-h-0">
        <Tree />
        <LayerPanel />
        <div className="w-[5px] shrink-0 bg-[#e8e8e8] flex flex-col">
          <div className="h-[350px]" />
          <div className="h-[100px] bg-[#6b7076]" />
        </div>
        <div className="flex-1 min-w-0 bg-black"><CadDrawing /></div>
      </div>
      <OptionsDialog />
    </div>
  );
}
